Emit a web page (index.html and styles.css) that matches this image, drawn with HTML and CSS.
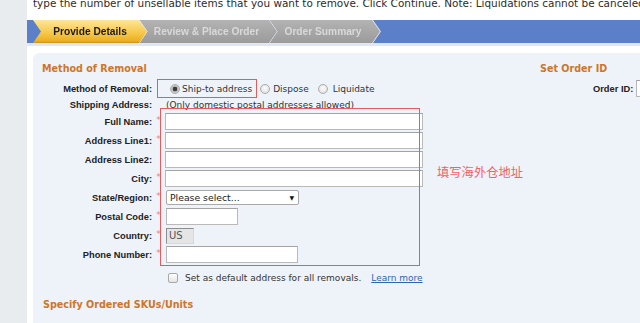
FILE: index.html
```html
<!DOCTYPE html>
<html lang="en">
  <head>
    <meta charset="utf-8" />
    <meta name="viewport" content="width=device-width, initial-scale=1" />
    <link rel="stylesheet" href="styles.css">
    <title>Create Removal Order</title>
  </head>
  <body>
    <div class="page">
      <div class="gutter"></div>
      <main class="main">
        <p class="intro">type the number of unsellable items that you want to remove. Click Continue. Note: Liquidations cannot be canceled once submitted.</p>

        <ol class="steps">
          <li class="step step--current"><span>Provide Details</span></li>
          <li class="step step--review"><span>Review &amp; Place Order</span></li>
          <li class="step step--summary"><span>Order Summary</span></li>
        </ol>

        <section class="panel">
          <div class="panel-left">
            <h2 class="section-title">Method of Removal</h2>

            <div class="row row--method">
              <span class="label">Method of Removal:</span>
              <span class="req"></span>
              <div class="methods">
                <label class="option option--marked"><span class="radio radio--on"></span>Ship-to address</label>
                <label class="option option--dispose"><span class="radio"></span>Dispose</label>
                <label class="option option--liquidate"><span class="radio"></span>Liquidate</label>
              </div>
            </div>

            <div class="row row--note">
              <span class="label">Shipping Address:</span>
              <span class="req"></span>
              <span class="note">(Only domestic postal addresses allowed)</span>
            </div>

            <div class="fields">
              <div class="row">
                <span class="label">Full Name:</span><span class="req">*</span>
                <input class="text text--long" type="text">
              </div>
              <div class="row">
                <span class="label">Address Line1:</span><span class="req">*</span>
                <input class="text text--long" type="text">
              </div>
              <div class="row">
                <span class="label">Address Line2:</span><span class="req"></span>
                <input class="text text--long" type="text">
              </div>
              <div class="row">
                <span class="label">City:</span><span class="req">*</span>
                <input class="text text--long" type="text">
              </div>
              <div class="row">
                <span class="label">State/Region:</span><span class="req">*</span>
                <div class="select"><span>Please select...</span><span class="select-arrow">▼</span></div>
              </div>
              <div class="row">
                <span class="label">Postal Code:</span><span class="req">*</span>
                <input class="text text--postal" type="text">
              </div>
              <div class="row">
                <span class="label">Country:</span><span class="req">*</span>
                <span class="readonly">US</span>
              </div>
              <div class="row">
                <span class="label">Phone Number:</span><span class="req">*</span>
                <input class="text text--phone" type="text">
              </div>

              <div class="mark-box"></div>
              <span class="mark-note">填写海外仓地址</span>
            </div>

            <div class="row row--check">
              <span class="label"></span>
              <span class="req"></span>
              <label class="default-check"><span class="checkbox"></span>Set as default address for all removals. <a href="#">Learn more</a></label>
            </div>

            <h2 class="section-title section-title--skus">Specify Ordered SKUs/Units</h2>
          </div>

          <div class="panel-right">
            <h2 class="section-title">Set Order ID</h2>
            <div class="order-row">
              <span class="label">Order ID:</span>
              <input class="text text--order" type="text">
            </div>
          </div>
        </section>
      </main>
    </div>
  </body>
</html>
```

FILE: styles.css
```css
:root {
  --gutter: #e9ecef;
  --panel: #eef3fa;
  --orange: #cf7528;
  --bar-blue: #5b80c9;
  --mark-red: #eb5a5a;
}

* {
  box-sizing: border-box;
}

html {
  font-family: "DejaVu Sans", Verdana, sans-serif;
  font-size: 9px;
  color: #333;
}

body {
  margin: 0;
}

.page {
  display: flex;
  width: 640px;
  height: 323px;
  overflow: hidden;
  background: #fff;
}

.gutter {
  flex: none;
  width: 27px;
  background: var(--gutter);
}

.main {
  flex: none;
  width: 760px;
  display: flex;
  flex-direction: column;
}

.intro {
  margin: -3px 0 0 6px;
  font-size: 10.45px;
  line-height: 12px;
  color: #2b2b2b;
  white-space: nowrap;
}

/* step bar: chevrons are clipped spans, the li carries a light edge */
.steps {
  display: flex;
  height: 26px;
  margin: 11px 0 0;
  padding: 0 0 0 6px;
  list-style: none;
  background: var(--bar-blue);
  border-bottom: 3px solid #dfe7f4;

  & .step {
    height: 100%;
    filter: drop-shadow(1px 0 0 #e6e6e6);
  }

  & .step + .step {
    margin-left: -7px;
  }

  & .step span {
    display: flex;
    align-items: center;
    justify-content: center;
    height: 100%;
    padding-right: 4px;
    clip-path: polygon(0 0, calc(100% - 8px) 0, 100% 50%, calc(100% - 8px) 100%, 0 100%, 8px 50%);
    background: linear-gradient(#b3b3b3, #9b9b9b);
    color: #d9d9d9;
    font: bold 10.2px "Liberation Sans", Arial, sans-serif;
    white-space: nowrap;
  }

  & .step--current span {
    padding-right: 0;
    background: linear-gradient(#fde69a, #f6c543 60%, #eaae24 92%, #c98f1c);
    color: #1a1a1a;
  }
}

.step--current {
  width: 114px;
}

.step--review {
  width: 137px;
}

.step--summary {
  width: 110px;
}

.panel {
  flex: 1;
  display: flex;
  margin: 7px 0 0 6px;
  padding: 9px 0 0 9px;
  background: var(--panel);
  border-radius: 6px 0 0 0;
}

.panel-left {
  flex: none;
  width: 490px;
}

.panel-right {
  flex: none;
  width: 220px;
  padding-left: 8px;
}

.section-title {
  margin: 0;
  font: bold 9.6px/14px "DejaVu Sans", Verdana, sans-serif;
  color: var(--orange);
}

.section-title--skus {
  margin-top: 14px;
  padding-left: 1px;
}

.row {
  display: grid;
  grid-template-columns: 110px 13px auto;
  align-items: center;
  height: 17px;
}

.label {
  text-align: right;
  font: bold 9.3px "Liberation Sans", Arial, sans-serif;
  color: #222;
  white-space: nowrap;
}

.req {
  align-self: start;
  padding-top: 2px;
  text-align: center;
  font-size: 9px;
  line-height: 10px;
  color: #e08585;
}

.row--method {
  height: 19px;
  margin-top: 3px;
}

.methods {
  display: flex;
  align-items: stretch;
  height: 100%;
}

.option {
  display: flex;
  align-items: center;
  white-space: nowrap;
  color: #333;
}

.option--marked {
  margin-left: -8px;
  padding: 0 4px 0 12px;
  border: 1px solid var(--mark-red);
  gap: 2px;
}

.option--dispose {
  margin-left: 3px;
  gap: 3px;
}

.option--liquidate {
  margin-left: 9px;
  gap: 5px;
}

.radio {
  flex: none;
  width: 10px;
  height: 10px;
  border: 1px solid #ababab;
  border-radius: 50%;
  background: radial-gradient(circle at 50% 40%, #fdfdfd, #d9d9d9);
}

.radio--on {
  background: radial-gradient(circle, #3c3c3c 0 2px, #b9b9b9 2.6px, #e3e3e3 100%);
}

.row--note {
  height: 12px;
  margin-top: 1px;
}

.note {
  padding-left: 1px;
  white-space: nowrap;
}

.fields {
  position: relative;
  display: grid;
  grid-auto-rows: 17px;
  row-gap: 2px;
  margin-top: 2px;
}

.text {
  display: block;
  height: 17px;
  margin: 0;
  padding: 0 3px;
  border: 1px solid #b9b9b9;
  border-top-color: #a3a3a3;
  background: #fff;
  font: inherit;
}

.text--long {
  width: 258px;
}

.text--postal {
  width: 72px;
  margin-left: 1px;
}

.text--phone {
  width: 132px;
  margin-left: 1px;
}

.select {
  display: flex;
  align-items: center;
  justify-content: space-between;
  width: 133px;
  height: 15px;
  margin-left: 1px;
  padding: 0 4px 0 3px;
  border: 1px solid #a9a9a9;
  border-radius: 2px;
  background: #fff;
  font-size: 9.3px;
  color: #222;
}

.select-arrow {
  font-size: 6px;
  color: #111;
}

.readonly {
  display: block;
  width: 28px;
  height: 16px;
  margin-left: 1px;
  padding-left: 2px;
  border: 1px solid #d8d8d8;
  border-top-color: #8e8e8e;
  border-left-color: #8e8e8e;
  background: #e5e5e5;
  font-size: 10px;
  line-height: 14px;
  color: #555;
}

/* red annotation drawn over the address fields */
.mark-box {
  position: absolute;
  z-index: 1;
  left: 118px;
  top: -5px;
  width: 260px;
  height: 158px;
  border: 1px solid var(--mark-red);
  pointer-events: none;
}

.mark-note {
  position: absolute;
  left: 395px;
  top: 52px;
  font: 12.3px/14px "Noto Sans CJK SC", sans-serif;
  color: #f26262;
  white-space: nowrap;
}

.row--check {
  height: 13px;
  margin-top: 8px;
}

.default-check {
  display: flex;
  align-items: center;
  gap: 7px;
  margin-left: 3px;
  white-space: nowrap;

  & a {
    margin-left: 3px;
    color: #2a67b1;
  }
}

.checkbox {
  flex: none;
  width: 10px;
  height: 10px;
  border: 1px solid #a8a8a8;
  border-radius: 2px;
  background: linear-gradient(#fff, #e3e3e3);
}

.order-row {
  display: flex;
  align-items: center;
  gap: 3px;
  height: 19px;
  margin: 3px 0 0 53px;

  & .text--order {
    width: 120px;
  }
}
```
